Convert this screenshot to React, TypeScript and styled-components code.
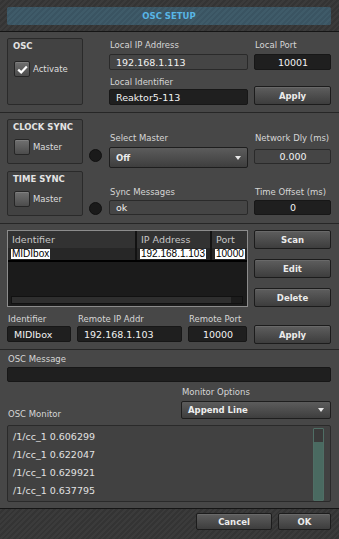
import styled, { createGlobalStyle } from 'styled-components'

const GlobalStyle = createGlobalStyle`
  html, body {
    margin: 0;
    padding: 0;
    background: #474747;
  }
`

const hatch = (a: string, b: string) =>
  `repeating-linear-gradient(135deg, ${a} 0px, ${a} 2px, ${b} 2px, ${b} 4px)`

const Window = styled.div`
  width: 339px;
  height: 539px;
  display: flex;
  flex-direction: column;
  background: #474747;
  color: #d8d8d8;
  font-family: "DejaVu Sans", sans-serif;
  overflow: hidden;
`

const Header = styled.div`
  box-sizing: border-box;
  height: 32px;
  padding: 7px 8px 0 7px;
  background: ${hatch('#3b3b3b', '#343434')};
  border-bottom: 1px solid #151515;
`

const TitleBar = styled.div`
  height: 18px;
  border-radius: 2px;
  background: ${hatch('#3f5b69', '#3a5462')};
  display: flex;
  align-items: center;
  justify-content: center;
  color: #58b6e6;
  font-size: 8.5px;
  font-weight: bold;
`

const Section = styled.div<{ $column?: boolean }>`
  display: flex;
  flex-direction: ${p => (p.$column ? 'column' : 'row')};
  padding: 6px 8px 7px 7px;
  border-bottom: 1px solid #262626;
`

const GroupBox = styled.div<{ $h: number }>`
  box-sizing: border-box;
  width: 76px;
  height: ${p => p.$h}px;
  padding: 0 6px;
  border: 1px solid #2a2a2a;
  border-radius: 2px;
  background: #424242;
`

const GroupColumn = styled.div`
  display: flex;
  flex-direction: column;
  gap: 7px;
`

const GroupTitle = styled.div`
  margin-left: -1px;
  font-size: 8.5px;
  font-weight: bold;
  line-height: 14px;
  color: #e4e4e4;
  white-space: nowrap;
`

const CheckRow = styled.div<{ $gap: number }>`
  display: flex;
  align-items: center;
  gap: 3px;
  margin-top: ${p => p.$gap}px;
  font-size: 8.5px;
  color: #dedede;
`

const CheckBox = styled.div`
  box-sizing: border-box;
  width: 16px;
  height: 16px;
  border: 1px solid #262626;
  border-radius: 2px;
  background: linear-gradient(#707070, #4c4c4c);
  box-shadow: inset 0 1px 0 rgba(255, 255, 255, 0.12);
  display: flex;
  align-items: center;
  justify-content: center;
`

const LedColumn = styled.div`
  width: 26px;
  box-sizing: border-box;
  padding: 30px 0 0 6px;
  display: flex;
  flex-direction: column;
  gap: 40px;
`

const Led = styled.div`
  box-sizing: border-box;
  width: 13px;
  height: 13px;
  border-radius: 50%;
  background: #1a1a1a;
  border: 1px solid #111;
`

const FieldGrid = styled.div<{ $rows: string }>`
  display: grid;
  grid-template-columns: 139px 77px;
  grid-template-rows: ${p => p.$rows};
  column-gap: 6px;
`

const Label = styled.div<{ $align?: string }>`
  align-self: ${p => p.$align ?? 'start'};
  padding-left: 1px;
  font-size: 8.5px;
  line-height: 14px;
  color: #d6d6d6;
  white-space: nowrap;
`

const Field = styled.div<{ $dark?: boolean; $center?: boolean; $h?: number }>`
  box-sizing: border-box;
  height: ${p => p.$h ?? 16}px;
  align-self: center;
  display: flex;
  align-items: center;
  justify-content: ${p => (p.$center ? 'center' : 'flex-start')};
  padding: 0 5px 0 6px;
  border: 1px solid ${p => (p.$dark ? '#171717' : '#2a2a2a')};
  border-radius: 2px;
  background: ${p => (p.$dark ? '#1f1f1f' : '#454545')};
  font-size: 9.5px;
  color: #f2f2f2;
  white-space: nowrap;
  overflow: hidden;
`

const Button = styled.button<{ $w?: number; $h?: number; $span?: number }>`
  box-sizing: border-box;
  width: ${p => (p.$w ? `${p.$w}px` : '100%')};
  height: ${p => p.$h ?? 19}px;
  grid-row: ${p => (p.$span ? `span ${p.$span}` : 'auto')};
  align-self: end;
  margin: 0;
  padding: 0;
  border: 1px solid #1c1c1c;
  border-radius: 2px;
  background: linear-gradient(#5e5e5e, #3d3d3d);
  box-shadow: inset 0 1px 0 rgba(255, 255, 255, 0.08);
  font-family: "DejaVu Sans", sans-serif;
  font-size: 8.5px;
  font-weight: bold;
  color: #ebebeb;
`

const RemoteApply = styled(Button)`
  margin-bottom: -2px;
`

const Select = styled.div<{ $h: number }>`
  box-sizing: border-box;
  height: ${p => p.$h}px;
  align-self: end;
  display: flex;
  align-items: center;
  justify-content: space-between;
  padding: 0 6px 0 6px;
  border: 1px solid #1e1e1e;
  border-radius: 2px;
  background: linear-gradient(#5c5c5c, #3e3e3e);
  font-size: 8.5px;
  font-weight: bold;
  color: #eeeeee;

  &::after {
    content: '';
    border-left: 3.5px solid transparent;
    border-right: 3.5px solid transparent;
    border-top: 4px solid #e8e8e8;
  }
`

const Table = styled.div`
  box-sizing: border-box;
  width: 241px;
  height: 77px;
  margin-right: 6px;
  border: 1px solid #8c8c8c;
  background: #1b1b1b;
  display: flex;
  flex-direction: column;
`

const TableRow = styled.div<{ $head?: boolean }>`
  display: grid;
  grid-template-columns: 127px 75px 37px;
  height: ${p => (p.$head ? 17 : 12)}px;
  background: ${p => (p.$head ? '#323232' : '#272727')};
  border-bottom: ${p => (p.$head ? 'none' : '2px solid #000')};
`

const Cell = styled.div<{ $head?: boolean }>`
  padding: ${p => (p.$head ? '0 0 0 4px' : '1px 0 0 3px')};
  font-size: 9.5px;
  line-height: 17px;
  color: #c8c8c8;
  white-space: nowrap;
  overflow: hidden;

  & + & {
    border-left: 2px solid #121212;
  }
`

const Highlight = styled.span`
  display: inline-block;
  vertical-align: top;
  padding: 0 1px;
  background: #ffffff;
  color: #000000;
  font-family: "Liberation Sans", Arial, sans-serif;
  font-size: 10px;
  line-height: 10px;
`

const HScroll = styled.div`
  box-sizing: border-box;
  height: 8px;
  margin: auto 4px 2px 3px;
  border: 1px solid #111;
  background: linear-gradient(to right, #2f2f2f 95%, #1c1c1c 95%);
`

const TableRowArea = styled.div`
  display: flex;
`

const ButtonColumn = styled.div`
  width: 77px;
  display: flex;
  flex-direction: column;
  gap: 10px;
`

const RemoteGrid = styled.div`
  display: grid;
  grid-template-columns: 64px 105px 59px 78px;
  grid-template-rows: 14px 16px;
  column-gap: 6px;
  margin-top: 5px;

  & > button {
    width: 77px;
    justify-self: end;
  }
`

const MonitorSection = styled.div`
  display: grid;
  padding: 2px 8px 6px 7px;
`

const MessageField = styled(Field)`
  margin-top: 1px;
`

const MonitorHeader = styled.div`
  display: flex;
  justify-content: space-between;
  align-items: flex-end;
  margin-top: 3px;
`

const MonitorTitle = styled(Label)`
  margin-bottom: -2px;
`

const OptionsStack = styled.div`
  width: 150px;
  display: grid;
  row-gap: 2px;
`

const MonitorBox = styled.div`
  box-sizing: border-box;
  height: 77px;
  margin-top: 6px;
  display: flex;
  padding: 2px 6px 0 5px;
  border: 1px solid #2a2a2a;
  border-radius: 2px;
  background: #414141;
`

const MonitorLines = styled.div`
  flex: 1;
  font-size: 9.5px;
  line-height: 18px;
  color: #e2e2e2;
`

const VScroll = styled.div`
  box-sizing: border-box;
  width: 11px;
  height: 73px;
  border: 1px solid #4f6e65;
  border-radius: 1px;
  background: #3a3a3a;
  display: flex;
  flex-direction: column;
  justify-content: flex-end;
`

const VThumb = styled.div`
  height: 58px;
  background: #4a6a61;
`

const Footer = styled.div`
  box-sizing: border-box;
  height: 31px;
  display: flex;
  justify-content: flex-end;
  align-items: flex-start;
  gap: 6px;
  padding: 4px 8px 0 0;
  border-top: 1px solid #151515;
  background: ${hatch('#3b3b3b', '#343434')};

  & > button {
    align-self: flex-start;
  }
`

const monitorLines = ['0.606299', '0.622047', '0.629921', '0.637795']

function Check() {
  return (
    <svg width="11" height="9" viewBox="0 0 11 9">
      <path d="M1.2 4.6 L4.2 7.4 L9.8 1.4" stroke="#ffffff" strokeWidth="2.2" fill="none" />
    </svg>
  )
}

export default function App() {
  return (
    <Window>
      <GlobalStyle />
      <Header>
        <TitleBar>OSC SETUP</TitleBar>
      </Header>

      <Section>
        <GroupBox $h={67} style={{ marginRight: 26 }}>
          <GroupTitle>OSC</GroupTitle>
          <CheckRow $gap={8}>
            <CheckBox>
              <Check />
            </CheckBox>
            Activate
          </CheckRow>
        </GroupBox>
        <FieldGrid $rows="16px 16px 19px 16px">
          <Label>Local IP Address</Label>
          <Label>Local Port</Label>
          <Field>192.168.1.113</Field>
          <Field $dark $center>10001</Field>
          <Label $align="end">Local Identifier</Label>
          <Button $span={2}>Apply</Button>
          <Field $dark>Reaktor5-113</Field>
        </FieldGrid>
      </Section>

      <Section>
        <GroupColumn>
          <GroupBox $h={45}>
            <GroupTitle>CLOCK SYNC</GroupTitle>
            <CheckRow $gap={5}>
              <CheckBox />
              Master
            </CheckRow>
          </GroupBox>
          <GroupBox $h={45}>
            <GroupTitle>TIME SYNC</GroupTitle>
            <CheckRow $gap={5}>
              <CheckBox />
              Master
            </CheckRow>
          </GroupBox>
        </GroupColumn>
        <LedColumn>
          <Led />
          <Led />
        </LedColumn>
        <FieldGrid $rows="26px 23px 31px 17px">
          <Label $align="end">Select Master</Label>
          <Label $align="end">Network Dly (ms)</Label>
          <Select $h={21}>Off</Select>
          <Field $h={15} $center>0.000</Field>
          <Label $align="end">Sync Messages</Label>
          <Label $align="end">Time Offset (ms)</Label>
          <Field $h={15}>ok</Field>
          <Field $h={15} $dark $center>0</Field>
        </FieldGrid>
      </Section>

      <Section $column>
        <TableRowArea>
          <Table>
            <TableRow $head>
              <Cell $head>Identifier</Cell>
              <Cell $head>IP Address</Cell>
              <Cell $head>Port</Cell>
            </TableRow>
            <TableRow>
              <Cell><Highlight>MIDIbox</Highlight></Cell>
              <Cell><Highlight>192.168.1.103</Highlight></Cell>
              <Cell><Highlight>10000</Highlight></Cell>
            </TableRow>
            <HScroll />
          </Table>
          <ButtonColumn>
            <Button>Scan</Button>
            <Button>Edit</Button>
            <Button>Delete</Button>
          </ButtonColumn>
        </TableRowArea>
        <RemoteGrid>
          <Label>Identifier</Label>
          <Label>Remote IP Addr</Label>
          <Label>Remote Port</Label>
          <RemoteApply $span={2}>Apply</RemoteApply>
          <Field $dark>MIDIbox</Field>
          <Field $dark>192.168.1.103</Field>
          <Field $dark $center>10000</Field>
        </RemoteGrid>
      </Section>

      <MonitorSection>
        <Label>OSC Message</Label>
        <MessageField $dark $h={15} />
        <MonitorHeader>
          <MonitorTitle $align="flex-end">OSC Monitor</MonitorTitle>
          <OptionsStack>
            <Label>Monitor Options</Label>
            <Select $h={18}>Append Line</Select>
          </OptionsStack>
        </MonitorHeader>
        <MonitorBox>
          <MonitorLines>
            {monitorLines.map(v => (
              <div key={v}>/1/cc_1 {v}</div>
            ))}
          </MonitorLines>
          <VScroll>
            <VThumb />
          </VScroll>
        </MonitorBox>
      </MonitorSection>

      <Footer>
        <Button $w={76} $h={17}>Cancel</Button>
        <Button $w={53} $h={17}>OK</Button>
      </Footer>
    </Window>
  )
}
